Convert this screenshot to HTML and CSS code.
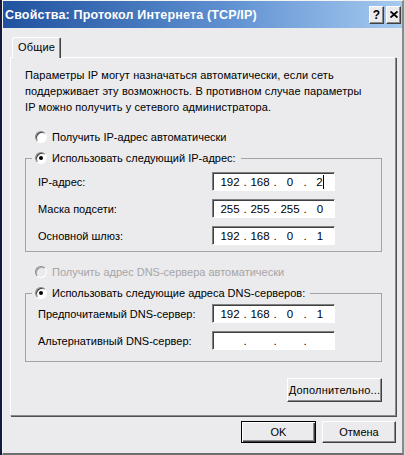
FILE: index.html
```html
<!DOCTYPE html>
<html lang="ru">
<head>
<meta charset="utf-8">
<title>Свойства: Протокол Интернета (TCP/IP)</title>
<link rel="stylesheet" href="styles.css">
</head>
<body>
<div class="window">
  <div class="titlebar">
    <span class="title">Свойства: Протокол Интернета (TCP/IP)</span>
    <div class="tb-buttons">
      <span class="tb-btn help">?</span>
      <span class="tb-btn close"><svg width="8" height="7" viewBox="0 0 8 7"><path d="M0.5 0.5 L7.5 6.5 M7.5 0.5 L0.5 6.5" stroke="#000" stroke-width="1.8" fill="none"/></svg></span>
    </div>
  </div>
  <div class="client">
    <div class="tabs"><div class="tab">Общие</div></div>
    <div class="panel">
      <p class="intro">Параметры IP могут назначаться автоматически, если сеть поддерживает эту возможность. В противном случае параметры IP можно получить у сетевого администратора.</p>
      <div class="radio"><span class="rb"></span>Получить IP-адрес автоматически</div>
      <fieldset class="group g1">
        <legend class="legend"><span class="rb checked"></span>Использовать следующий IP-адрес:</legend>
        <div class="row"><span class="lbl">IP-адрес:</span>
          <div class="ip"><span class="oct">192</span><span class="dot">.</span><span class="oct">168</span><span class="dot">.</span><span class="oct">0</span><span class="dot">.</span><span class="oct">2<span class="caret"></span></span></div></div>
        <div class="row"><span class="lbl">Маска подсети:</span>
          <div class="ip"><span class="oct">255</span><span class="dot">.</span><span class="oct">255</span><span class="dot">.</span><span class="oct">255</span><span class="dot">.</span><span class="oct">0</span></div></div>
        <div class="row"><span class="lbl">Основной шлюз:</span>
          <div class="ip"><span class="oct">192</span><span class="dot">.</span><span class="oct">168</span><span class="dot">.</span><span class="oct">0</span><span class="dot">.</span><span class="oct">1</span></div></div>
      </fieldset>
      <div class="radio disabled"><span class="rb"></span>Получить адрес DNS-сервера автоматически</div>
      <fieldset class="group g2">
        <legend class="legend"><span class="rb checked"></span>Использовать следующие адреса DNS-серверов:</legend>
        <div class="row"><span class="lbl">Предпочитаемый DNS-сервер:</span>
          <div class="ip"><span class="oct">192</span><span class="dot">.</span><span class="oct">168</span><span class="dot">.</span><span class="oct">0</span><span class="dot">.</span><span class="oct">1</span></div></div>
        <div class="row"><span class="lbl">Альтернативный DNS-сервер:</span>
          <div class="ip"><span class="oct"></span><span class="dot">.</span><span class="oct"></span><span class="dot">.</span><span class="oct"></span><span class="dot">.</span><span class="oct"></span></div></div>
      </fieldset>
      <div class="adv"><button class="btn adv-btn">Дополнительно...</button></div>
    </div>
    <div class="buttons">
      <button class="btn ok">OK</button>
      <button class="btn cancel">Отмена</button>
    </div>
  </div>
</div>
</body>
</html>
```
FILE: styles.css
```css
* { box-sizing: border-box; }

body {
  margin: 0;
  width: 405px;
  height: 455px;
  overflow: hidden;
  background: linear-gradient(to right, #141a3c 2px, #d6d6d8 2px);
  font-family: "Liberation Sans", Arial, sans-serif;
  font-size: 11px;
  color: #000;
}

.window {
  margin-left: 2px;
  width: 402px;
  height: 455px;
  background: #ebeaed;
  border-top: 1px solid #f4f4f4;
  border-left: 1px solid #f4f4f4;
  border-right: 2px solid #8a8a8a;
  border-bottom: 2px solid #6e6e6e;
  display: flex;
  flex-direction: column;
}

.titlebar {
  height: 27px;
  flex: none;
  display: flex;
  align-items: center;
  justify-content: space-between;
  padding: 0 1px 0 2px;
  background: linear-gradient(to right, #21529f, #5d8fd0 55%, #a6caf0);
  color: #fff;
  font-weight: bold;
  font-size: 12.5px;
}

.title { letter-spacing: 0.15px; }

.tb-buttons { display: flex; gap: 2px; }

.tb-btn {
  width: 15px;
  height: 18px;
  display: flex;
  align-items: center;
  justify-content: center;
  background: #ebeaed;
  border: 1px solid;
  border-color: #fff #404040 #404040 #fff;
  box-shadow: inset -1px -1px #8a8a8a;
  color: #000;
  font-size: 12px;
  font-weight: bold;
}

.client {
  flex: 1;
  display: flex;
  flex-direction: column;
  padding: 9px 6px 0 7px;
}

.tabs {
  display: flex;
  padding-left: 2px;
  height: 21px;
  margin-bottom: -1px;
  position: relative;
  z-index: 1;
}

.tab {
  width: 49px;
  height: 21px;
  background: #ebeaed;
  border: 1px solid;
  border-bottom: none;
  border-color: #fff #404040 transparent #fff;
  box-shadow: inset -1px 0 #8a8a8a;
  border-radius: 2px 2px 0 0;
  padding-left: 5px;
  line-height: 18px;
  letter-spacing: 0.2px;
}

.panel {
  height: 359px;
  flex: none;
  display: flex;
  flex-direction: column;
  border: 1px solid;
  border-color: #fff #8a8a8a #8a8a8a #fff;
  box-shadow: 1px 1px 0 #505050;
  padding: 9px 13px 0 14px;
}

.intro {
  margin: 0;
  max-width: 340px;
  line-height: 16px;
  letter-spacing: 0.1px;
}

.radio {
  display: flex;
  align-items: center;
  gap: 5px;
  height: 16px;
  margin-left: 10px;
  margin-top: 14px;
}

.radio.disabled {
  color: #a6a6a6;
  margin-top: 12px;
}

.rb {
  width: 12px;
  height: 12px;
  flex: none;
  border-radius: 50%;
  background: #fff;
  border: 1px solid;
  border-color: #8a8a8a #fff #fff #8a8a8a;
  box-shadow: inset 1px 1px #404040;
  display: flex;
  align-items: center;
  justify-content: center;
}

.disabled .rb {
  background: #ebeaed;
  box-shadow: inset 1px 1px #a8a8a8;
}

.rb.checked::after {
  content: "";
  width: 4px;
  height: 4px;
  border-radius: 50%;
  background: #000;
}

.group {
  margin: 5px 0 0 0;
  padding: 6px 12px 6px 12px;
  border: 1px solid #a3a3a3;
  min-width: 0;
}

.g2 { padding-top: 3px; padding-bottom: 11px; }

.legend {
  display: flex;
  align-items: center;
  gap: 5px;
  height: 16px;
  line-height: 16px;
  padding: 0 5px 0 3px;
  margin-left: -6px;
}

.row {
  display: flex;
  align-items: center;
  height: 19px;
}

.row + .row { margin-top: 8px; }

.lbl { width: 174px; flex: none; }

.ip {
  width: 123px;
  height: 19px;
  display: flex;
  align-items: center;
  background: #fff;
  border: 1px solid;
  border-color: #808080 #fff #fff #808080;
  box-shadow: inset 1px 1px #404040;
  padding-left: 3px;
  line-height: 16px;
  font-size: 11.5px;
}

.oct {
  width: 28px;
  flex: none;
  text-align: center;
}

.dot {
  width: 2px;
  flex: none;
  display: flex;
  justify-content: center;
}

.caret {
  display: inline-block;
  width: 1px;
  height: 14px;
  background: #000;
  vertical-align: -3px;
}

.btn {
  font-family: "Liberation Sans", Arial, sans-serif;
  font-size: 11px;
  color: #000;
  background: #ebeaed;
  border: 1px solid;
  border-color: #fff #404040 #404040 #fff;
  box-shadow: inset -1px -1px #8a8a8a;
  padding: 0;
  margin: 0;
}

.adv {
  display: flex;
  justify-content: flex-end;
  margin-top: 16px;
}

.adv-btn { width: 95px; height: 24px; letter-spacing: 0.2px; }

.buttons {
  display: flex;
  justify-content: flex-end;
  gap: 6px;
  margin-top: 5px;
}

.ok {
  width: 75px;
  height: 22px;
  border: 1px solid #000;
  box-shadow: inset 1px 1px #fff, inset -1px -1px #404040, inset -2px -2px #8a8a8a;
}

.cancel { width: 74px; height: 22px; }
```
